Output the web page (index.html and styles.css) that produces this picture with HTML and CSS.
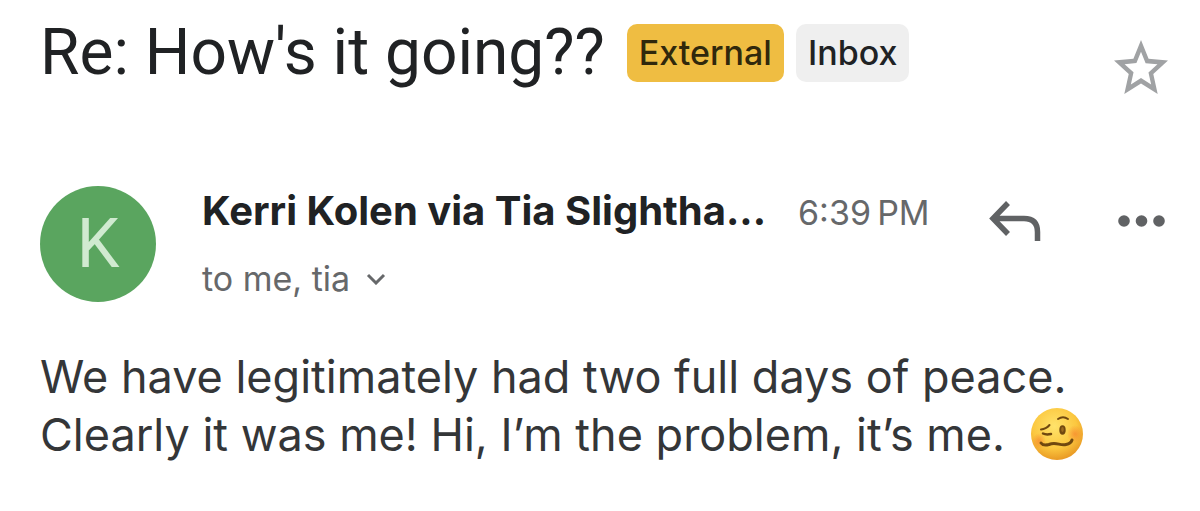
FILE: index.html
```html
<!DOCTYPE html>
<html lang="en">
  <head>
    <meta charset="UTF-8" />
    <meta name="viewport" content="width=device-width, initial-scale=1.0" />
    <title>Re: How's it going??</title>
    <link rel="stylesheet" href="styles.css">
  </head>
  <body>
    <main class="mail">
      <header class="subject">
        <h1>Re: How's it going??</h1>
        <span class="label external">External</span>
        <span class="label">Inbox</span>
        <button class="icon-button star" aria-label="Star">
          <svg width="54" height="54" viewBox="2 2 20 19" preserveAspectRatio="none">
            <path d="M22 9.24l-7.19-.62L12 2 9.19 8.63 2 9.24l5.46 4.73L5.82 21 12 17.27 18.18 21l-1.63-7.03L22 9.24zM12 15.4l-3.76 2.27 1-4.28-3.32-2.88 4.38-.38L12 6.1l1.71 4.04 4.38.38-3.32 2.88 1 4.28L12 15.4z" fill="#a0a2a4" />
          </svg>
        </button>
      </header>

      <section class="sender">
        <div class="avatar">K</div>
        <div class="details">
          <div class="top-line">
            <strong class="name">Kerri Kolen via Tia Slightha...</strong>
            <time class="time">6:39&#8201;PM</time>
          </div>
          <button class="recipients">
            to me, tia
            <svg width="20" height="12" viewBox="0 0 20 12">
              <path d="M2 2 L10 10 L18 2" fill="none" stroke="#66686a" stroke-width="3" />
            </svg>
          </button>
        </div>
        <div class="actions">
          <button class="icon-button" aria-label="Reply">
            <svg width="54" height="42" viewBox="0 0 54 42">
              <path d="M20 3 L5 18.5 L20 34 M5 18.5 H36 Q49.5 18.5 49.5 32 V41" fill="none" stroke="#606264" stroke-width="5.5" />
            </svg>
          </button>
          <button class="icon-button" aria-label="More">
            <svg width="48" height="12" viewBox="0 0 48 12">
              <g fill="#606264">
                <circle cx="6" cy="6" r="5.8" />
                <circle cx="23.5" cy="6" r="5.8" />
                <circle cx="41" cy="6" r="5.8" />
              </g>
            </svg>
          </button>
        </div>
      </section>

      <p class="message">
        We have legitimately had two full days of peace.<br />
        Clearly it was me! Hi, I’m the problem, it’s me.
        <svg class="emoji" width="54" height="54" viewBox="0 0 54 54" role="img" aria-label="Woozy face">
          <defs>
            <radialGradient id="face" cx="45%" cy="35%" r="65%">
              <stop offset="0" stop-color="#ffe36b" />
              <stop offset="0.65" stop-color="#fbc73f" />
              <stop offset="1" stop-color="#e99a25" />
            </radialGradient>
            <radialGradient id="blush">
              <stop offset="0" stop-color="#f5772a" stop-opacity="0.6" />
              <stop offset="1" stop-color="#f5772a" stop-opacity="0" />
            </radialGradient>
          </defs>
          <circle cx="27" cy="27" r="26" fill="url(#face)" />
          <ellipse cx="9" cy="34" rx="7" ry="8" fill="url(#blush)" />
          <ellipse cx="45" cy="27" rx="8" ry="9" fill="url(#blush)" />
          <g fill="none" stroke="#70480f" stroke-width="2" stroke-linecap="round" stroke-linejoin="round">
            <path d="M11 22.5 Q16 22 19.5 18" />
            <path d="M28 12 Q33 8.5 38 12" />
            <path d="M13 26.5 Q16 28 21 27" stroke-width="2.5" />
            <path d="M11 36 Q13 39 19 37.5 C26 34.5 30 39 36 37.5 Q41 36.5 42 33" stroke-width="3" />
          </g>
          <ellipse cx="32.5" cy="23" rx="3.2" ry="4.8" fill="#70480f" />
          <ellipse cx="32.5" cy="22.5" rx="1.3" ry="2.4" fill="#9b6a20" />
        </svg>
      </p>
    </main>
  </body>
</html>
```
FILE: styles.css
```css
* {
  box-sizing: border-box;
}
body {
  margin: 0;
  background: #fff;
  color: #202224;
  font-family: Inter, "Liberation Sans", sans-serif;
}
.mail {
  padding: 12px 34px 0 40px;
}
button {
  padding: 0;
  border: 0;
  background: none;
  font-family: inherit;
  cursor: pointer;
}
svg {
  display: block;
}
.subject {
  display: flex;
  align-items: center;
  gap: 12px;
}
h1 {
  margin: 0 10px 0 0;
  font-family: Roboto, sans-serif;
  font-size: 64px;
  font-weight: 400;
  line-height: 76px;
}
.label {
  padding: 0 12px;
  border-radius: 10px;
  background: #efefef;
  font-size: 34px;
  font-weight: 500;
  line-height: 58px;
}
.external {
  background: #efbd42;
  color: #30280c;
}
.star {
  margin: 28px -2px 0 auto;
}
.sender {
  display: flex;
  margin-top: 92px;
}
.avatar {
  width: 116px;
  height: 116px;
  border-radius: 50%;
  background: #5aa55f;
  color: #d0ead0;
  font-family: Roboto, sans-serif;
  font-size: 68px;
  font-weight: 400;
  line-height: 116px;
  text-align: center;
}
.details {
  margin-left: 46px;
}
.top-line {
  display: flex;
  align-items: baseline;
  gap: 32px;
  line-height: 50px;
}
.name {
  font-size: 40px;
  font-weight: 700;
}
.time {
  color: #66686a;
  font-size: 34px;
}
.recipients {
  display: flex;
  align-items: center;
  gap: 16px;
  margin-top: 18px;
  color: #66686a;
  font-size: 34px;
  line-height: 46px;
}
.actions {
  display: flex;
  align-items: center;
  gap: 76px;
  height: 70px;
  margin-left: auto;
}
.message {
  margin: 46px 0 0;
  color: #343638;
  font-size: 45px;
  line-height: 58px;
}
.emoji {
  display: inline-block;
  margin-left: 12px;
  vertical-align: -10px;
}
```
